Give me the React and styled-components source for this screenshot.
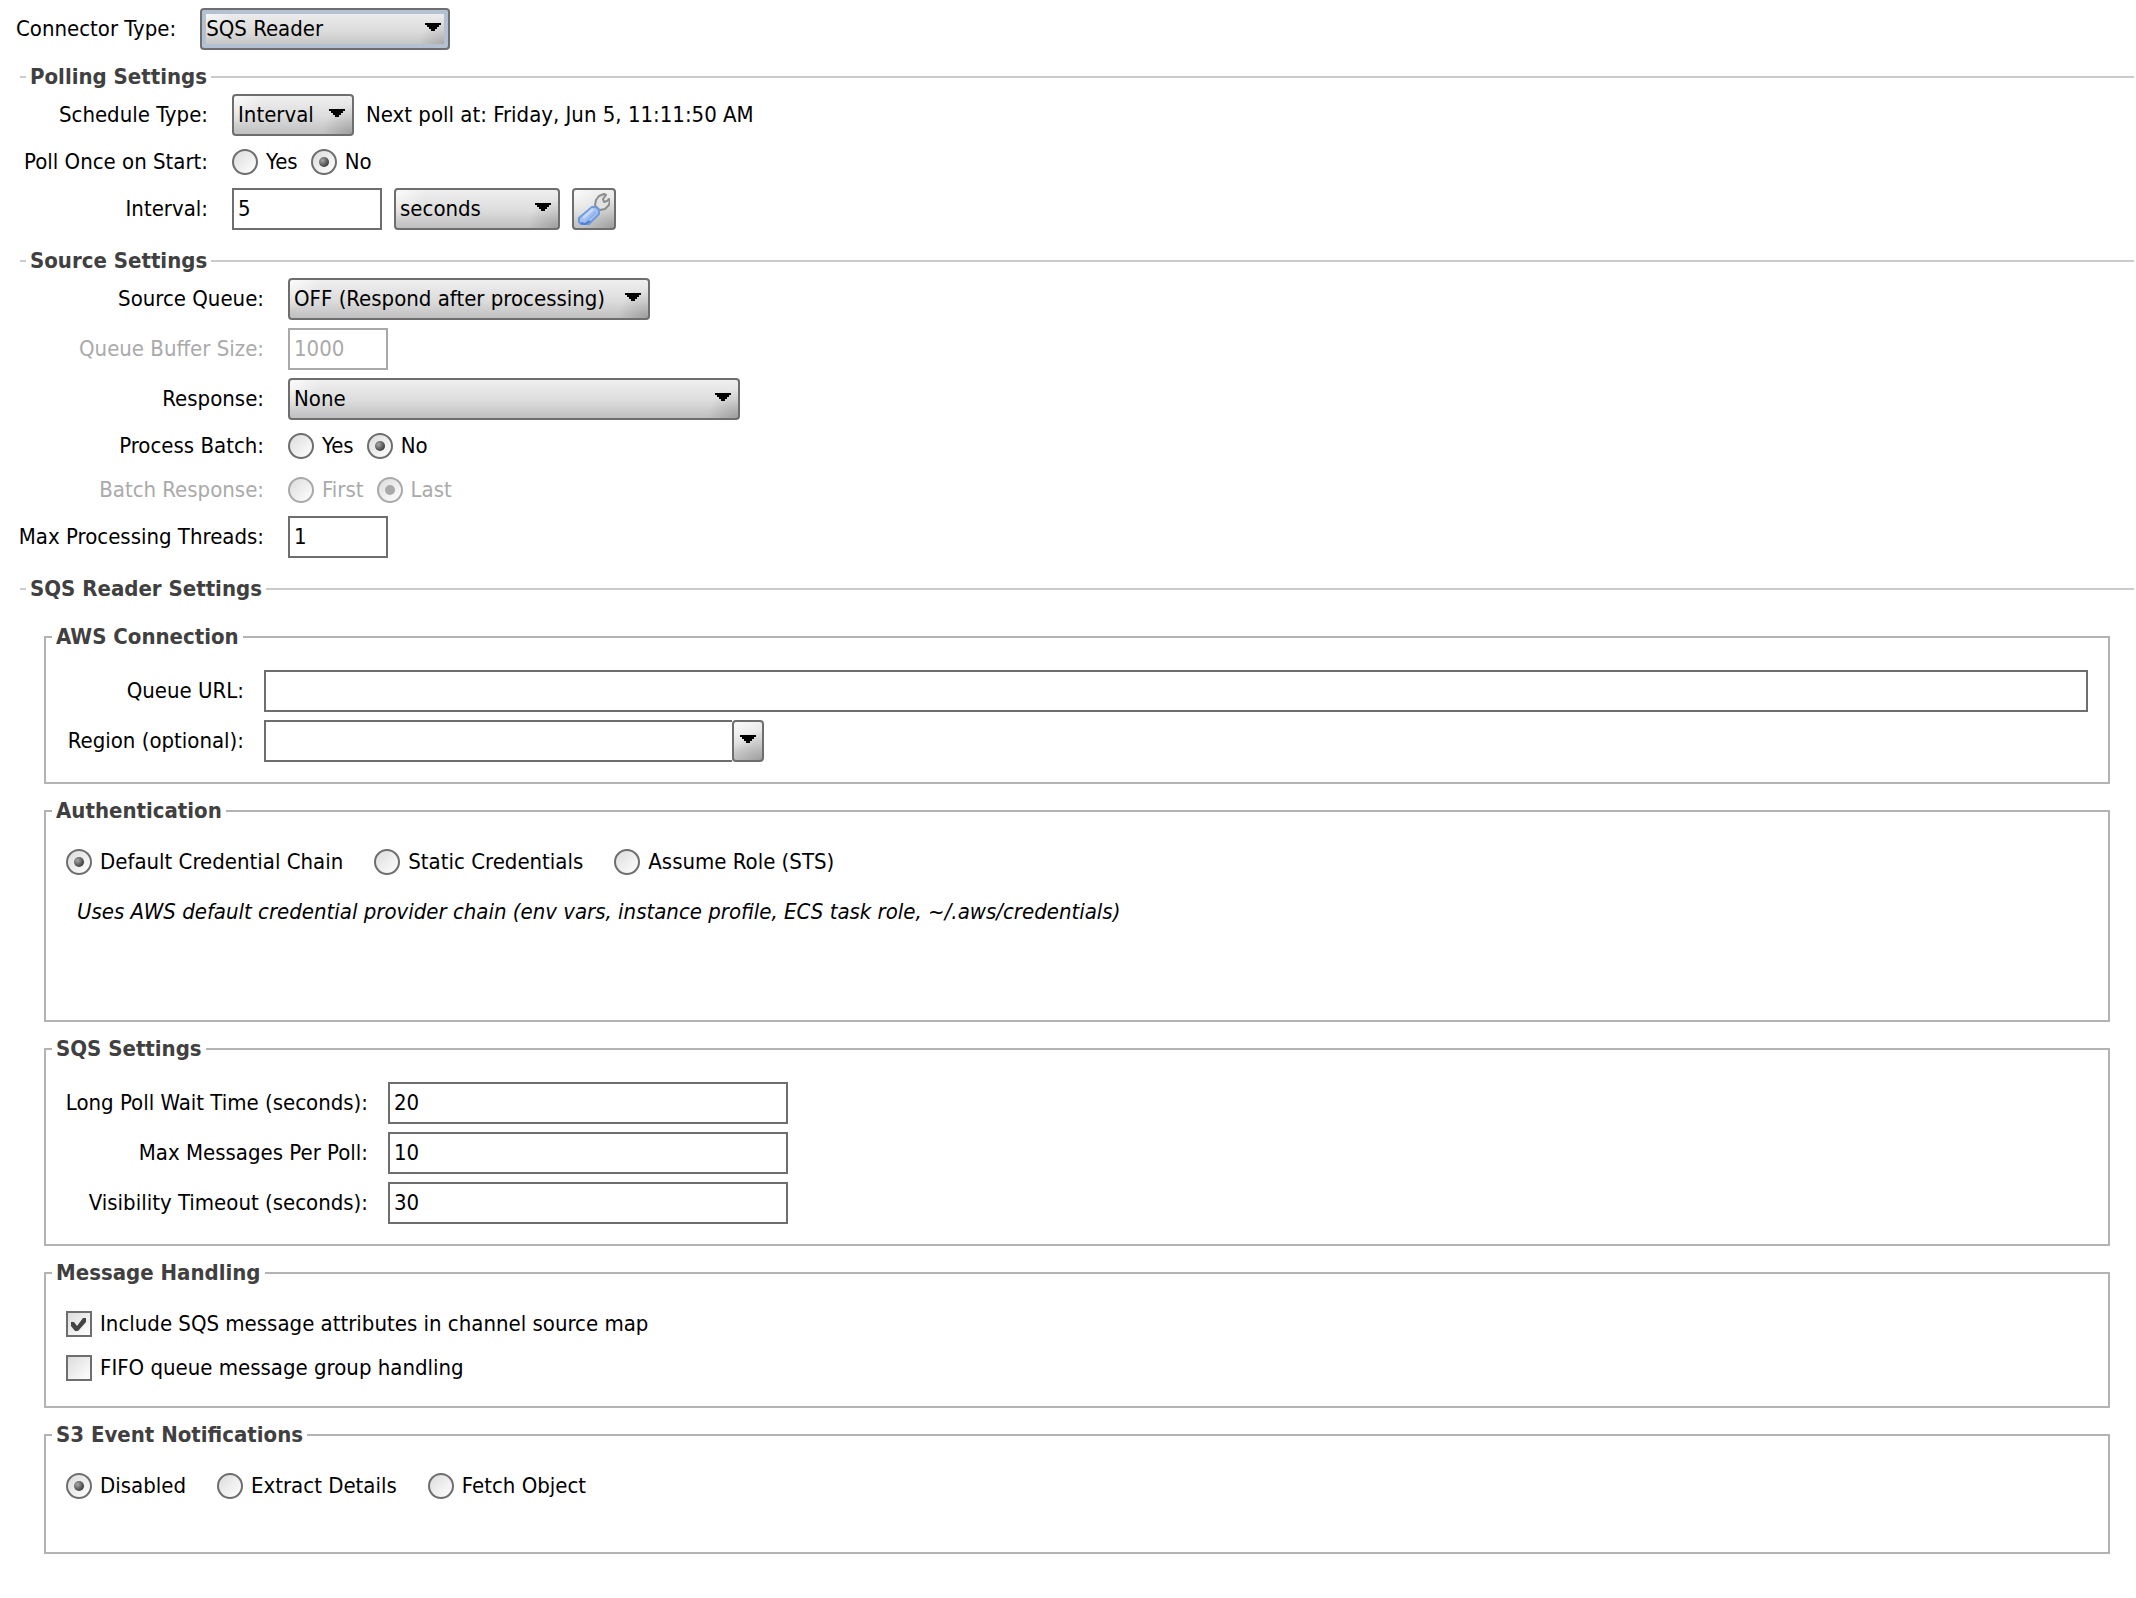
import React from "react";
import styled, { createGlobalStyle, css } from "styled-components";

const GlobalStyle = createGlobalStyle`
  * {
    box-sizing: border-box;
  }
  body {
    margin: 0;
    background: #fff;
    color: #000;
  }
  body, input, select, button {
    font-family: "DejaVu Sans Condensed", Tahoma, Verdana, sans-serif;
    font-size: 22px;
    line-height: 28px;
  }
`;

const Arrow = () => (
  <svg width="16" height="8" viewBox="0 0 16 8" shapeRendering="crispEdges" aria-hidden="true">
    <path d="M0 0h16v2h-2v2h-2v2h-2v2H6V6H4V4H2V2H0z" />
  </svg>
);

const Wrench = () => (
  <svg width="32" height="32" viewBox="0 0 32 32" aria-hidden="true">
    <path
      d="M19 15l-2-3 1-5 3-4 5-2 2 1-3 4 1 3 3-1 2-2 1 1-1 5-4 4-5 1z"
      fill="#e2e2e2"
      stroke="#8c8c8c"
      strokeWidth="2"
      strokeLinejoin="round"
    />
    <path d="M17 13l3 3" stroke="#a8a8a8" strokeWidth="3" />
    <path
      d="M14 14h4l3 3v4L11 31l-3 1H4l-3-3v-4z"
      fill="#a5c1f0"
      stroke="#6f99dd"
      strokeWidth="2"
      strokeLinejoin="round"
    />
    <path d="M5 25l10-9" stroke="#c6d9f8" strokeWidth="3" />
    <path d="M8 29L18 19" stroke="#8fb2ec" strokeWidth="2" />
    <path d="M3 30l4 1 5-3" stroke="#4b7ed6" strokeWidth="2" fill="none" />
  </svg>
);

const Select = ({ id, value, width, focused, label }) => (
  <SELECT $width={width} $focused={focused}>
    <select id={id} defaultValue={value} aria-label={label}>
      <option>{value}</option>
    </select>
    <Arrow />
  </SELECT>
);

const Radios = ({ name, labelledBy, label, options, value, disabled, wide }) => (
  <RADIOS role="radiogroup" aria-labelledby={labelledBy} aria-label={label} $wide={wide}>
    {options.map((option) => (
      <Option key={option} $disabled={disabled}>
        <Radio name={name} defaultChecked={option === value} disabled={disabled} />
        {option}
      </Option>
    ))}
  </RADIOS>
);

const App = () => {
  return (
    <>
      <GlobalStyle />
      <PAGE>
        <Connector>
          <label htmlFor="connector">Connector Type:</label>
          <Select id="connector" value="SQS Reader" width={250} focused />
        </Connector>

        <Section>
          <legend>Polling Settings</legend>
          <Form $label={182} $gap={24}>
            <Label htmlFor="schedule">Schedule Type:</Label>
            <Field>
              <Select id="schedule" value="Interval" width={122} />
              <span>Next poll at: Friday, Jun 5, 11:11:50 AM</span>
            </Field>
            <Label as="span" id="pollOnce">Poll Once on Start:</Label>
            <Radios name="pollOnce" labelledBy="pollOnce" options={["Yes", "No"]} value="No" />
            <Label htmlFor="interval">Interval:</Label>
            <Field>
              <TextBox id="interval" defaultValue="5" $width={150} />
              <Select value="seconds" width={166} label="Interval unit" />
              <ToolButton type="button" aria-label="Advanced settings">
                <Wrench />
              </ToolButton>
            </Field>
          </Form>
        </Section>

        <Section>
          <legend>Source Settings</legend>
          <Form $label={238} $gap={24}>
            <Label htmlFor="queue">Source Queue:</Label>
            <Select id="queue" value="OFF (Respond after processing)" width={362} />
            <Label htmlFor="buffer" $disabled>Queue Buffer Size:</Label>
            <TextBox id="buffer" defaultValue="1000" disabled $width={100} />
            <Label htmlFor="response">Response:</Label>
            <Select id="response" value="None" width={452} />
            <Label as="span" id="batch">Process Batch:</Label>
            <Radios name="batch" labelledBy="batch" options={["Yes", "No"]} value="No" />
            <Label as="span" id="batchResponse" $disabled>Batch Response:</Label>
            <Radios
              name="batchResponse"
              labelledBy="batchResponse"
              options={["First", "Last"]}
              value="Last"
              disabled
            />
            <Label htmlFor="threads">Max Processing Threads:</Label>
            <TextBox id="threads" defaultValue="1" $width={100} />
          </Form>
        </Section>

        <Section>
          <legend>SQS Reader Settings</legend>
          <Groups>
            <Group>
              <legend>AWS Connection</legend>
              <Form $label={192} $gap={20}>
                <Label htmlFor="url">Queue URL:</Label>
                <TextBox id="url" />
                <Label htmlFor="region">Region (optional):</Label>
                <Combo>
                  <TextBox id="region" />
                  <button type="button" aria-label="Show regions">
                    <Arrow />
                  </button>
                </Combo>
              </Form>
            </Group>

            <Group $height={225}>
              <legend>Authentication</legend>
              <Stack>
                <Radios
                  name="auth"
                  label="Authentication"
                  options={["Default Credential Chain", "Static Credentials", "Assume Role (STS)"]}
                  value="Default Credential Chain"
                  wide
                />
                <Hint>
                  Uses AWS default credential provider chain (env vars, instance profile, ECS task role,
                  ~/.aws/credentials)
                </Hint>
              </Stack>
            </Group>

            <Group>
              <legend>SQS Settings</legend>
              <Form $label={316} $gap={20}>
                <Label htmlFor="wait">Long Poll Wait Time (seconds):</Label>
                <TextBox id="wait" defaultValue="20" $width={400} />
                <Label htmlFor="max">Max Messages Per Poll:</Label>
                <TextBox id="max" defaultValue="10" $width={400} />
                <Label htmlFor="visibility">Visibility Timeout (seconds):</Label>
                <TextBox id="visibility" defaultValue="30" $width={400} />
              </Form>
            </Group>

            <Group>
              <legend>Message Handling</legend>
              <Stack>
                <Option>
                  <Check defaultChecked />
                  Include SQS message attributes in channel source map
                </Option>
                <Option>
                  <Check />
                  FIFO queue message group handling
                </Option>
              </Stack>
            </Group>

            <Group $height={133}>
              <legend>S3 Event Notifications</legend>
              <Stack>
                <Radios
                  name="s3"
                  label="S3 Event Notifications"
                  options={["Disabled", "Extract Details", "Fetch Object"]}
                  value="Disabled"
                  wide
                />
              </Stack>
            </Group>
          </Groups>
        </Section>
      </PAGE>
    </>
  );
};

const raised = css`
  background:
    radial-gradient(circle at 100% 100%, rgba(0, 0, 0, 0.18), rgba(0, 0, 0, 0) 30px),
    radial-gradient(circle at 0 0, rgba(255, 255, 255, 0.7), rgba(255, 255, 255, 0) 30px),
    linear-gradient(#efefef, #dcdcdc 55%, #c0c0c0);
  border: 2px solid #6e6e6e;
  border-radius: 4px;
`;

const PAGE = styled.main`
  min-width: 900px;
`;

const Connector = styled.div`
  display: flex;
  align-items: center;
  gap: 24px;
  padding: 8px 16px 13px;
`;

const Section = styled.fieldset`
  margin: 0 2px 17px 20px;
  padding: 3px 0 0 6px;
  border: 0 solid #cbcbcb;
  border-top-width: 2px;
  min-width: 0;

  legend {
    padding: 0 4px;
    color: #404040;
    font-weight: bold;
  }
`;

const Groups = styled.div`
  display: flex;
  flex-direction: column;
  gap: 13px;
  padding: 17px 24px 0 18px;
`;

const Group = styled.fieldset`
  margin: 0;
  padding: 19px 20px 20px 6px;
  border: 2px solid #b3b3b3;
  min-width: 0;
  min-height: ${(p) => (p.$height ? `${p.$height}px` : "auto")};
`;

const Form = styled.div`
  display: grid;
  grid-template-columns: ${(p) => p.$label}px 1fr;
  column-gap: ${(p) => p.$gap}px;
  row-gap: 8px;
  align-items: center;
`;

const Label = styled.label`
  justify-self: end;
  white-space: nowrap;
  color: ${(p) => (p.$disabled ? "#aaa" : "#000")};
`;

const Field = styled.div`
  display: flex;
  align-items: center;
  gap: 12px;
`;

const Stack = styled.div`
  display: flex;
  flex-direction: column;
  gap: 8px;
  padding-left: 14px;
`;

const TextBox = styled.input.attrs({ type: "text" })`
  width: ${(p) => (p.$width ? `${p.$width}px` : "100%")};
  height: 42px;
  padding: 0 4px 2px;
  border: 2px solid #6e6e6e;
  border-radius: 0;
  background: #fff;
  color: #000;

  &:disabled {
    border-color: #a9a9a9;
    color: #aaa;
  }
`;

const SELECT = styled.div`
  position: relative;
  width: ${(p) => p.$width}px;

  select {
    display: block;
    appearance: none;
    width: 100%;
    height: 42px;
    padding: 0 28px 0 4px;
    color: #000;
    ${raised}
    ${(p) => p.$focused && "box-shadow: inset 0 0 0 4px #b3c1d3;"}
  }
  svg {
    position: absolute;
    top: 15px;
    right: 9px;
    pointer-events: none;
  }
`;

const ToolButton = styled.button`
  display: flex;
  align-items: center;
  justify-content: center;
  width: 44px;
  height: 42px;
  padding: 0;
  ${raised}
`;

const Combo = styled.div`
  display: flex;
  width: 500px;

  input {
    flex: 1;
    border-right: 0;
  }
  button {
    display: flex;
    justify-content: center;
    width: 32px;
    height: 42px;
    padding: 13px 0 0;
    ${raised}
  }
`;

const RADIOS = styled.div`
  display: flex;
  gap: ${(p) => (p.$wide ? 31 : 13)}px;
`;

const Option = styled.label`
  display: flex;
  align-items: center;
  gap: 8px;
  height: 36px;
  color: ${(p) => (p.$disabled ? "#aaa" : "#000")};
`;

const Radio = styled.input.attrs({ type: "radio" })`
  appearance: none;
  display: grid;
  place-items: center;
  width: 26px;
  height: 26px;
  margin: 0;
  border: 2px solid #6e6e6e;
  border-radius: 50%;
  background: linear-gradient(135deg, #dcdcdc, #fff);

  &:checked::before {
    content: "";
    width: 10px;
    height: 10px;
    border-radius: 50%;
    background: radial-gradient(circle at 35% 35%, #a8a8a8, #333 80%);
  }
  &:disabled {
    border-color: #a9a9a9;
  }
  &:disabled::before {
    background: #a9a9a9;
  }
`;

const CheckBox = styled.span`
  display: grid;

  input,
  svg {
    grid-area: 1 / 1;
  }
  input {
    appearance: none;
    width: 26px;
    height: 26px;
    margin: 0;
    border: 2px solid #6e6e6e;
    background: linear-gradient(135deg, #dcdcdc, #fff);
  }
  svg {
    visibility: hidden;
    pointer-events: none;
  }
  input:checked + svg {
    visibility: visible;
  }
`;

const Check = (props) => (
  <CheckBox>
    <input type="checkbox" {...props} />
    <svg width="26" height="26" viewBox="0 0 26 26" aria-hidden="true">
      <path d="M5 11h3l3 4 6-8h3v4l-8 9H9l-4-5z" fill="#444" />
    </svg>
  </CheckBox>
);

const Hint = styled.p`
  margin: 10px 11px;
  font-style: italic;
`;

export default App;
